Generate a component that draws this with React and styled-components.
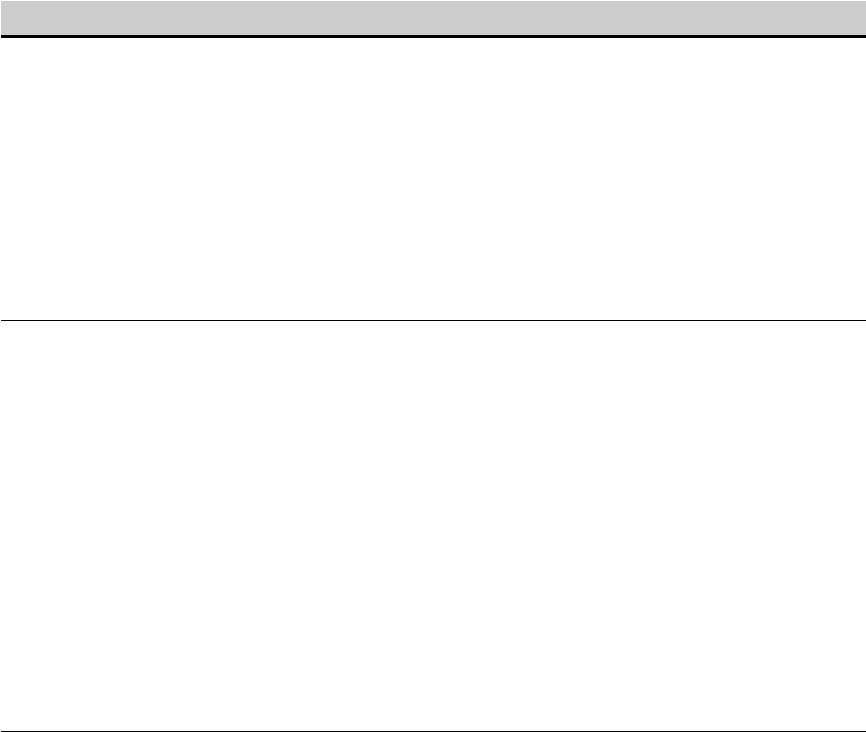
import styled, { createGlobalStyle } from 'styled-components'

const GlobalStyle = createGlobalStyle`
    html, body {
        margin: 0;
        padding: 0;
        background: #ffffff;
        font-family: "Liberation Sans", Arial, sans-serif;
    }
`

const Table = styled.div`
    display: flex;
    flex-direction: column;
    width: 865px;
    padding: 1px 0 0 1px;
`

const HeaderRow = styled.div`
    height: 34px;
    background: #cccccc;
    border-bottom: 3px solid #000000;
`

const Row = styled.div`
    height: ${props => props.$height}px;
    border-bottom: 1px solid #000000;
`

const App = () => {
    return (
        <>
            <GlobalStyle />
            <Table>
                <HeaderRow />
                <Row $height={282} />
                <Row $height={410} />
            </Table>
        </>
    )
}

export default App
